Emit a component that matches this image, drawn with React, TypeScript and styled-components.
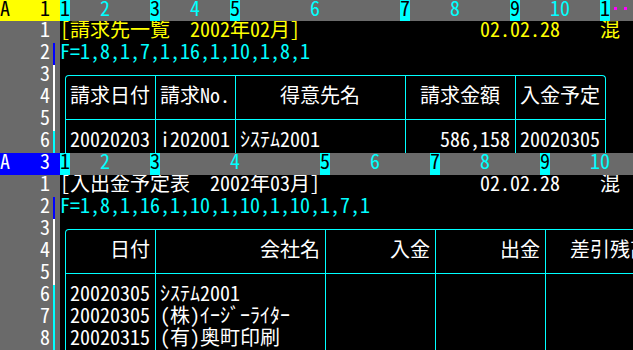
import React from "react";
import styled, { createGlobalStyle } from "styled-components";

const GlobalStyle = createGlobalStyle`
  html, body { margin: 0; padding: 0; background: #000; }
  body { overflow: hidden; }
`;

const GREY = "#6a6a6a";
const CYAN = "#00ffff";
const YELLOW = "#ffff00";
const BLUE = "#0000ff";
const WHITE = "#ffffff";
const MAGENTA = "#ff00ff";

type Align = "flex-start" | "center" | "flex-end";

const isHalf = (ch: string) => {
  const c = ch.codePointAt(0) ?? 0;
  return c < 0x100 || (c >= 0xff61 && c <= 0xff9f);
};

const Screen = styled.div`
  width: 633px;
  height: 350px;
  overflow: hidden;
  background: #000;
  display: flex;
  flex-direction: column;
  font-family: "Noto Sans Mono CJK JP", "Noto Sans CJK JP", "Noto Sans", sans-serif;
  font-size: 20px;
  font-weight: 300;
  color: ${WHITE};
`;

const RunRow = styled.span<{ $color?: string }>`
  display: flex;
  height: 22px;
  color: ${(p) => p.$color ?? "inherit"};
`;

const Glyph = styled.span<{ $wide: boolean }>`
  display: flex;
  justify-content: center;
  flex: none;
  width: ${(p) => (p.$wide ? 20 : 10)}px;
  height: 22px;
  line-height: 16px;
  white-space: pre;
`;

const Text: React.FC<{ children: string; color?: string }> = ({ children, color }) => (
  <RunRow $color={color}>
    {Array.from(children).map((ch, i) => (
      <Glyph key={i} $wide={!isHalf(ch)}>
        {ch}
      </Glyph>
    ))}
  </RunRow>
);

/* ---------- ruler ---------- */

const RulerBar = styled.div<{ $h: number }>`
  display: flex;
  flex: none;
  height: ${(p) => p.$h}px;
  overflow: hidden;
  background: ${GREY};
`;

const PaneLabel = styled.div<{ $bg: string; $fg: string }>`
  display: flex;
  justify-content: space-between;
  flex: none;
  width: 60px;
  padding-right: 10px;
  box-sizing: border-box;
  background: ${(p) => p.$bg};
  color: ${(p) => p.$fg};
`;

const RulerCol = styled.div<{ $w: number; $sep: boolean; $offset: number }>`
  display: flex;
  flex: none;
  width: ${(p) => p.$w * 10}px;
  padding-left: ${(p) => p.$offset * 10}px;
  box-sizing: border-box;
  background: ${(p) => (p.$sep ? CYAN : "transparent")};
  color: ${(p) => (p.$sep ? "#000" : CYAN)};
`;

const Truncated = styled.div`
  display: flex;
  align-items: flex-start;
  gap: 7px;
  padding: 7px 0 0 4px;
`;

const Dot = styled.span`
  width: 3px;
  height: 3px;
  background: ${MAGENTA};
`;

/* ---------- body ---------- */

const Pane = styled.section`
  display: flex;
  flex-direction: column;
  flex: none;
`;

const Body = styled.div<{ $rows: number }>`
  display: flex;
  flex: none;
  height: ${(p) => p.$rows * 22}px;
`;

const Gutter = styled.div`
  display: flex;
  flex-direction: column;
  flex: none;
  width: 60px;
  background: ${GREY};
`;

const RowNum = styled.div`
  display: flex;
  height: 22px;
`;

const RowDigits = styled.div`
  display: flex;
  justify-content: flex-end;
  width: 50px;
`;

const RowBar = styled.span<{ $color: string }>`
  width: 2px;
  margin-left: 3px;
  background: ${(p) => p.$color};
`;

const Content = styled.div`
  display: flex;
  flex-direction: column;
  flex: 1;
  min-width: 0;
  overflow: hidden;
`;

const TitleLine = styled.div`
  display: grid;
  grid-template-columns: 420px 120px auto;
  height: 22px;
`;

const TableArea = styled.div`
  display: flex;
  flex-direction: column;
  flex: 1;
  padding: 10px 0 0 5px;
`;

const Table = styled.div<{ $cols: string }>`
  display: grid;
  grid-template-columns: ${(p) => p.$cols};
  grid-template-rows: auto 1fr;
  flex: 1;
  align-self: flex-start;
  border: 1px solid ${CYAN};
  border-bottom: none;
  border-radius: 4px 4px 0 0;
`;

const Cell = styled.div<{ $align: Align; $head: boolean; $last: boolean }>`
  display: flex;
  flex-direction: column;
  align-items: ${(p) => p.$align};
  padding: ${(p) => (p.$head ? "11px 5px 10px 4px" : "11px 5px 0 4px")};
  border-right: ${(p) => (p.$last ? "none" : `1px solid ${CYAN}`)};
  border-bottom: ${(p) => (p.$head ? `1px solid ${CYAN}` : "none")};
  color: ${WHITE};
  overflow: hidden;
`;

/* ---------- data ---------- */

type Col = { width: number; head: string; headAlign: Align; lines: string[]; bodyAlign: Align };

type PaneData = {
  no: string;
  labelBg: string;
  labelFg: string;
  rulerHeight: number;
  spec: number[];
  title: string;
  accent: string;
  rows: number;
  cols: Col[];
};

const panes: PaneData[] = [
  {
    no: "1",
    labelBg: YELLOW,
    labelFg: "#000",
    rulerHeight: 21,
    spec: [1, 8, 1, 7, 1, 16, 1, 10, 1, 8, 1],
    title: "[請求先一覧　2002年02月]",
    accent: YELLOW,
    rows: 6,
    cols: [
      { width: 90, head: "請求日付", headAlign: "flex-start", lines: ["20020203"], bodyAlign: "flex-start" },
      { width: 80, head: "請求No.", headAlign: "flex-start", lines: ["i202001"], bodyAlign: "flex-start" },
      { width: 170, head: "得意先名", headAlign: "center", lines: ["ｼｽﾃﾑ2001"], bodyAlign: "flex-start" },
      { width: 110, head: "請求金額", headAlign: "center", lines: ["586,158"], bodyAlign: "flex-end" },
      { width: 89, head: "入金予定", headAlign: "flex-start", lines: ["20020305"], bodyAlign: "flex-start" },
    ],
  },
  {
    no: "3",
    labelBg: BLUE,
    labelFg: WHITE,
    rulerHeight: 22,
    spec: [1, 8, 1, 16, 1, 10, 1, 10, 1, 10, 1, 7, 1],
    title: "[入出金予定表　2002年03月]",
    accent: WHITE,
    rows: 8,
    cols: [
      { width: 90, head: "日付", headAlign: "flex-end", lines: ["20020305", "20020305", "20020315"], bodyAlign: "flex-start" },
      { width: 170, head: "会社名", headAlign: "flex-end", lines: ["ｼｽﾃﾑ2001", "(株)ｲｰｼﾞｰﾗｲﾀｰ", "(有)奥町印刷"], bodyAlign: "flex-start" },
      { width: 110, head: "入金", headAlign: "flex-end", lines: [], bodyAlign: "flex-start" },
      { width: 110, head: "出金", headAlign: "flex-end", lines: [], bodyAlign: "flex-start" },
      { width: 109, head: "差引残高", headAlign: "flex-end", lines: [], bodyAlign: "flex-start" },
    ],
  },
];

const barColor = (row: number) =>
  row === 1 ? "transparent" : row === 2 ? BLUE : row <= 5 ? WHITE : CYAN;

const Ruler: React.FC<{ pane: PaneData }> = ({ pane }) => (
  <RulerBar $h={pane.rulerHeight}>
    <PaneLabel $bg={pane.labelBg} $fg={pane.labelFg}>
      <Text>A</Text>
      <Text>{pane.no}</Text>
    </PaneLabel>
    {pane.spec.map((w, i) => {
      const label = String(i + 1);
      const shown = label.length > w ? label.slice(0, w) : label;
      const offset = Math.floor((w - shown.length) / 2);
      return (
        <React.Fragment key={i}>
          <RulerCol $w={w} $sep={w === 1} $offset={offset}>
            <Text>{shown}</Text>
          </RulerCol>
          {shown !== label && (
            <Truncated>
              <Dot />
              <Dot />
            </Truncated>
          )}
        </React.Fragment>
      );
    })}
  </RulerBar>
);

const SheetPane: React.FC<{ pane: PaneData }> = ({ pane }) => (
  <Pane>
    <Ruler pane={pane} />
    <Body $rows={pane.rows}>
      <Gutter>
        {Array.from({ length: pane.rows }, (_, i) => (
          <RowNum key={i}>
            <RowDigits>
              <Text>{String(i + 1)}</Text>
            </RowDigits>
            <RowBar $color={barColor(i + 1)} />
          </RowNum>
        ))}
      </Gutter>
      <Content>
        <TitleLine>
          <Text color={pane.accent}>{pane.title}</Text>
          <Text color={pane.accent}>02.02.28</Text>
          <Text color={pane.accent}>混</Text>
        </TitleLine>
        <Text color={CYAN}>{"F=" + pane.spec.join(",")}</Text>
        <TableArea>
          <Table $cols={pane.cols.map((c) => `${c.width}px`).join(" ")}>
            {pane.cols.map((c, i) => (
              <Cell key={"h" + i} $align={c.headAlign} $head $last={i === pane.cols.length - 1}>
                <Text>{c.head}</Text>
              </Cell>
            ))}
            {pane.cols.map((c, i) => (
              <Cell key={"b" + i} $align={c.bodyAlign} $head={false} $last={i === pane.cols.length - 1}>
                {c.lines.map((l, j) => (
                  <Text key={j}>{l}</Text>
                ))}
              </Cell>
            ))}
          </Table>
        </TableArea>
      </Content>
    </Body>
  </Pane>
);

export default function App() {
  return (
    <>
      <GlobalStyle />
      <Screen>
        {panes.map((p) => (
          <SheetPane key={p.no} pane={p} />
        ))}
      </Screen>
    </>
  );
}
